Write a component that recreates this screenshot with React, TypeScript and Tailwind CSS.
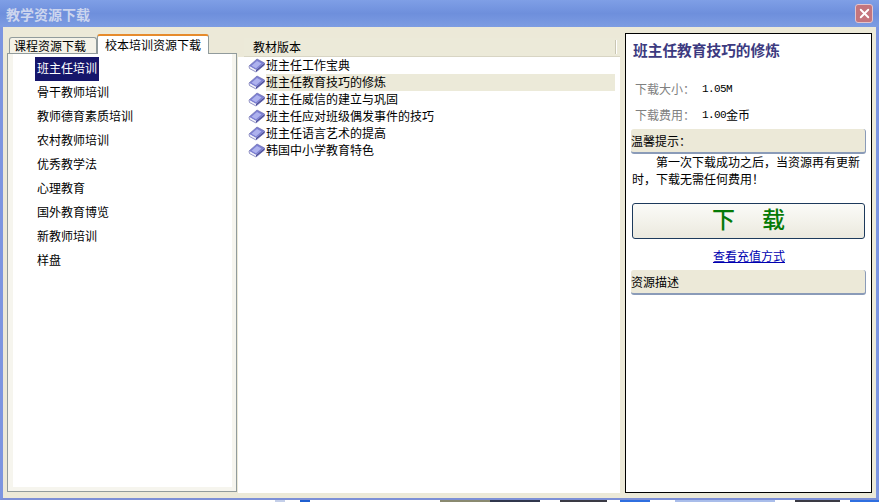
import React from 'react';
import { X } from 'lucide-react';

const categories = ['班主任培训', '骨干教师培训', '教师德育素质培训', '农村教师培训', '优秀教学法', '心理教育', '国外教育博览', '新教师培训', '样盘'];
const books = ['班主任工作宝典', '班主任教育技巧的修炼', '班主任威信的建立与巩固', '班主任应对班级偶发事件的技巧', '班主任语言艺术的提高', '韩国中小学教育特色'];
const font = "font-['Noto_Sans_CJK_SC','Noto_Sans_CJK_TC',sans-serif]";

function BookIcon() {
  return (
    <svg width="17" height="15" viewBox="0 0 17 15" className="shrink-0">
      <path d="M1 8 L9 1 L16.5 5 L8 12 Z" fill="#7c7fd2" />
      <path d="M3.5 7.8 L9 3 L13.5 5.4 L8 10.2 Z" fill="#aeb2ee" />
      <path d="M1 8 L8 12 L8 14 L1.5 10.5 Z" fill="#f0f0f8" />
      <path d="M8 12 L16.5 5 L16.5 7 L8 14 Z" fill="#4c4e9c" />
      <path d="M1 8 L9 1 L16.5 5 L16.5 7 L8 14 L1.5 10.5 Z" fill="none" stroke="#6a6cb0" strokeWidth="0.7" />
    </svg>
  );
}

function SectionBar({ children }: { children: React.ReactNode }) {
  return (
    <div className="h-[25px] ml-[-1px] mr-[-1px] flex items-center bg-[#ece9d8] rounded-[3px] border-b-2 border-r border-[#8a9bb8]">
      {children}
    </div>
  );
}

export default function App() {
  return (
    <div className={`w-[879px] h-[502px] flex flex-col overflow-hidden bg-white text-[12px] text-black ${font}`}>
      {/* title bar */}
      <div className="h-[27px] shrink-0 flex items-center justify-between pl-[6px] pr-[6px] bg-gradient-to-b from-[#7f9fe6] via-[#6e8fdc] to-[#7d9ce2]">
        <span className="text-[14px] leading-none font-bold text-[#ccd5ee]">教学资源下载</span>
        <div className="w-[18px] h-[19px] rounded-[3px] flex items-center justify-center bg-[#c4757d] border border-[#e3c4cc]">
          <X size={15} strokeWidth={3} className="text-white" />
        </div>
      </div>

      {/* window body */}
      <div className="h-[473px] shrink-0 flex border-x-[3px] border-b-2 border-x-[#7c95e0] border-b-[#7c8fd6] bg-[#ece9d8]">
        {/* left tabs */}
        <div className="w-[230px] shrink-0 ml-[4px] pt-[6px] flex flex-col">
          <div className="h-[20px] shrink-0 flex items-end pl-[2px]">
            <div className="w-[88px] h-[16px] flex items-center pl-[4px] rounded-t-[3px] border border-b-0 border-[#919b9c] bg-[#f4f2e8]">课程资源下载</div>
            <div className="relative z-10 mb-[-1px] w-[112px] h-[20px] flex items-center justify-center rounded-t-[3px] border-x border-[#919b9c] border-t-2 border-t-[#e68b2c] bg-white">校本培训资源下载</div>
          </div>
          <div className="w-[230px] h-[439px] border border-[#919b9c] bg-[#f6f5ee] pr-[4px] pb-[4px] pl-[5px]">
            <div className="h-full bg-white pl-[22px] pt-[3px] flex flex-col items-start">
              {categories.map((c, i) => (
                <div key={c} className={`h-[24px] leading-[21px] px-[2px] ${i === 0 ? 'bg-[#16166b] text-white' : ''}`}>{c}</div>
              ))}
            </div>
          </div>
        </div>

        {/* center list */}
        <div className="w-[382px] shrink-0 ml-[1px] mt-[11px] mb-[5px] flex flex-col">
          <div className="h-[19px] shrink-0 ml-[6px] flex items-center justify-between pl-[9px] pr-[3px] bg-[#ecead9] border-b border-[#d8d5c4]">
            <span>教材版本</span>
            <span className="w-[2px] h-[14px] border-l border-[#c9c6b4] border-r border-r-white" />
          </div>
          <div className="flex-1 flex flex-col pl-[10px] bg-white">
            {books.map((b, i) => (
              <div key={b} className="h-[17px] flex items-center">
                <BookIcon />
                <span className={`ml-[1px] w-[349px] h-[17px] leading-[15px] ${i === 1 ? 'bg-[#ecead9]' : ''}`}>{b}</span>
              </div>
            ))}
          </div>
        </div>

        {/* detail panel */}
        <div className="w-[247px] shrink-0 ml-[5px] mt-[6px] mb-[5px] border border-black bg-white px-[6px] flex flex-col">
          <div className="h-[24px] mt-[4px] pl-[1px] flex items-center text-[14.7px] font-bold text-[#3c3a80]">班主任教育技巧的修炼</div>
          <div className="mt-[19px] h-[16px] flex items-center pl-[3px]">
            <span className="text-[#808080] w-[67px]">下载大小：</span>
            <span className="font-['Liberation_Mono',monospace] text-[11px] tracking-[-0.6px]">1.05M</span>
          </div>
          <div className="mt-[10px] h-[16px] flex items-center pl-[3px]">
            <span className="text-[#808080] w-[67px]">下载费用：</span>
            <span className="font-['Liberation_Mono',monospace] text-[11px] tracking-[-0.6px]">1.00</span>
            <span>金币</span>
          </div>
          <div className="mt-[6px]"><SectionBar>温馨提示：</SectionBar></div>
          <p className="mt-[-1px] leading-[17px] indent-[24px]">第一次下载成功之后，当资源再有更新时，下载无需任何费用！</p>
          <button className="mt-[16px] h-[36px] shrink-0 pb-[6px] flex items-center justify-center rounded-[3px] border border-[#1d3a5c] bg-gradient-to-b from-[#fbfbf8] to-[#ebe9de] text-[23px] leading-none font-medium text-[#067a06]">
            下<span className="w-[27px]" />载
          </button>
          <a className="mt-[10px] h-[14px] pl-[1px] leading-[14px] text-center text-[#0000b0] underline">查看充值方式</a>
          <div className="mt-[7px]"><SectionBar>资源描述</SectionBar></div>
        </div>
      </div>

      {/* desktop showing through under the window */}
      <div className="h-[2px] shrink-0 flex">
        <div className="w-[275px] bg-white" />
        <div className="w-[10px] bg-[#c4cfe9]" />
        <div className="w-[15px] bg-white" />
        <div className="w-[10px] bg-[#1f5fd0]" />
        <div className="w-[130px] bg-white" />
        <div className="w-[50px] bg-[#8a8a70]" />
        <div className="w-[50px] bg-[#30364c]" />
        <div className="w-[20px] bg-white" />
        <div className="w-[47px] bg-[#3a3a44]" />
        <div className="w-[13px] bg-white" />
        <div className="w-[30px] bg-[#2f6fe0]" />
        <div className="w-[25px] bg-white" />
        <div className="w-[100px] bg-[#a9bdea]" />
        <div className="w-[20px] bg-white" />
        <div className="w-[45px] bg-[#3a3a44]" />
        <div className="w-[10px] bg-white" />
        <div className="w-[29px] bg-[#2f6fe0]" />
      </div>
    </div>
  );
}
